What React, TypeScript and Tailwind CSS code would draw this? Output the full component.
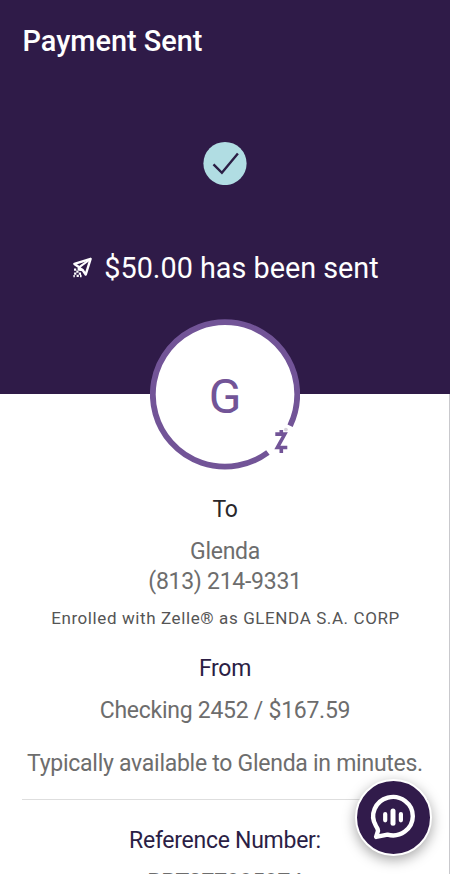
import React from "react";

function PlaneIcon() {
  return (
    <svg width="21" height="21" viewBox="0 0 21 21" fill="none" className="relative -top-[2px] left-px mr-[12px] shrink-0" aria-hidden="true">
      <path d="M18.6 1.8 L2.4 6.9 L6.8 10 V12.6 L10.6 13 L13.7 17.6 Z" stroke="#fff" strokeWidth="2.4" strokeLinejoin="round" />
      <path d="M18.2 2.2 L7 10.4 L10.8 13" stroke="#fff" strokeWidth="2" strokeLinejoin="round" />
      <path d="M2 12.6h2.2 M4.3 14.6h2.2 M6.8 16.6H9 M2.1 16.6h2.2 M4.6 18.8h2.2 M8 19h1.6 M1.4 19.2h1.4" stroke="#fff" strokeWidth="2.3" />
    </svg>
  );
}

function Avatar() {
  return (
    <div className="absolute left-[150px] top-[319px] flex h-[151px] w-[150px] items-center justify-center">
      <svg width="150" height="151" viewBox="0 0 150 151" className="absolute inset-0" aria-hidden="true">
        <circle cx="75" cy="75.5" r="74" fill="#fff" />
        <path d="M117.9 133.5 A72.2 72.2 0 1 1 140.1 106.7" fill="none" stroke="#725497" strokeWidth="5.8" />
        <circle cx="135.9" cy="110.6" r="1.9" fill="#d8d3dc" />
        <path d="M125.3 115.1 H134.8 L127.4 128.5 H137.3 M131.3 111 V115 M131.3 129 V134" fill="none" stroke="#725497" strokeWidth="3.6" />
      </svg>
      <span className="relative top-[2px] text-[48px] leading-none text-[#725497]">G</span>
    </div>
  );
}

function ChatButton() {
  return (
    <button className="absolute left-[355px] top-[779px] flex h-[77px] w-[77px] items-center justify-center rounded-full border-2 border-white bg-[#311b4b] shadow-[0_4px_13px_rgba(0,0,0,0.35)]" aria-label="Chat">
      <svg width="73" height="73" viewBox="0 0 73 73" fill="none" stroke="#fff" strokeLinecap="round" strokeLinejoin="round" className="shrink-0">
        <path d="M19 45 A19.8 19.2 0 1 1 30.5 53.6 L19.1 55.9 L21 49.8 Q20.8 47.5 19 45 Z" strokeWidth="4.4" />
        <path d="M28.2 33v6.3 M43.9 33v6.3" strokeWidth="4.2" />
        <path d="M36 30v12.2" strokeWidth="5" />
      </svg>
    </button>
  );
}

export default function App() {
  return (
    <main className="relative h-[874px] w-[450px] overflow-hidden bg-white font-[Roboto,sans-serif]">
      <header className="flex h-[394px] flex-col items-center bg-[#2f1b48] text-white">
        <h1 className="mt-[23px] w-full pl-[22.5px] text-[28.9px] font-medium leading-[36px]">Payment Sent</h1>
        <svg width="44" height="44" viewBox="0 0 44 44" className="mt-[82px]" aria-hidden="true">
          <circle cx="22" cy="22.5" r="21.6" fill="#b1dde3" />
          <path d="M10.5 23.4 L18.9 31.8 L34.9 12.5" fill="none" stroke="#2b1e45" strokeWidth="2.4" />
        </svg>
        <p className="mt-[66px] flex h-[36px] items-center whitespace-nowrap text-[28.8px]">
          <PlaneIcon />
          <span>$50.00 has been sent</span>
        </p>
      </header>
      <section className="flex h-[480px] flex-col items-center whitespace-nowrap border-r border-[#c9c9cd] pl-px pt-[101px] text-center text-[23px] leading-[30px] tracking-[-0.27px] text-[#6d6d6d]">
        <h2 className="text-[#29272b]">To</h2>
        <p className="mt-[12px]">Glenda</p>
        <p>(813) 214-9331</p>
        <p className="mt-[9px] pl-px text-[17px] leading-[24px] tracking-[0.6px] text-[#555]">Enrolled with Zelle® as GLENDA S.A. CORP</p>
        <h2 className="mt-[24px] text-[#2b1e45]">From</h2>
        <p className="mt-[12px]">Checking 2452 / $167.59</p>
        <p className="mt-[23px]">Typically available to Glenda in minutes.</p>
        <hr className="mt-[20px] w-[406px] shrink-0 border-[#dedede]" />
        <h2 className="mt-[26px] text-[#2b1e45]">Reference Number:</h2>
        <p className="mt-[12px]">RPT077995974</p>
      </section>
      <Avatar />
      <ChatButton />
    </main>
  );
}
